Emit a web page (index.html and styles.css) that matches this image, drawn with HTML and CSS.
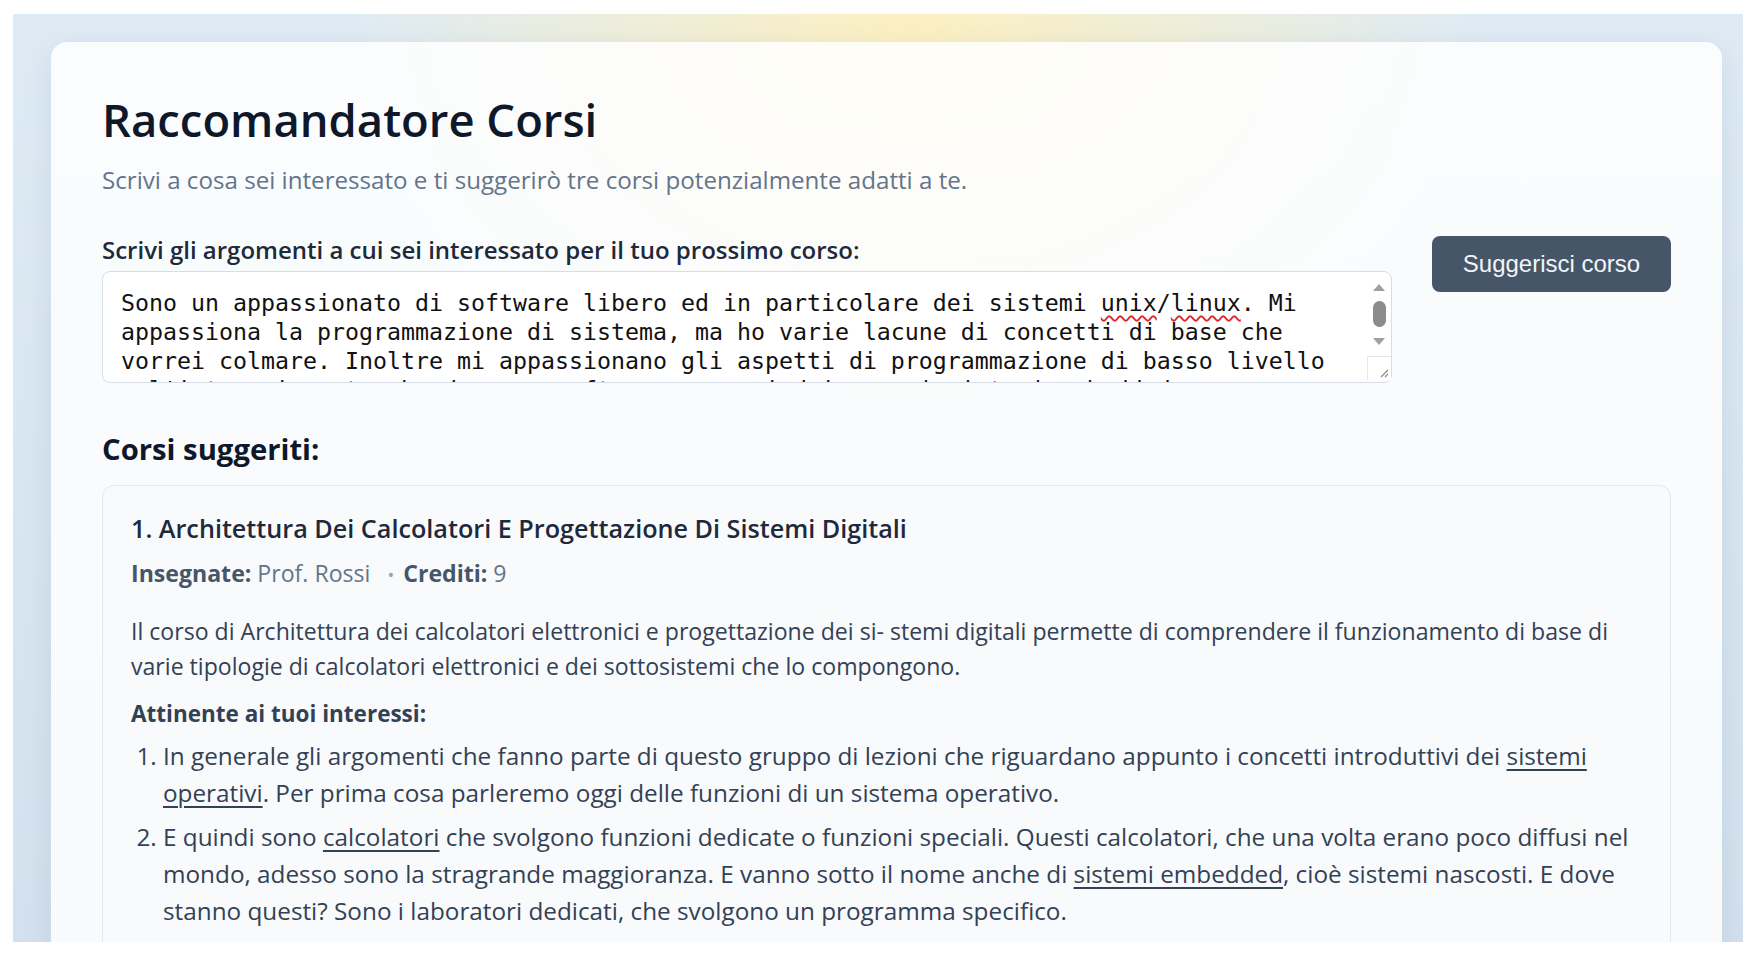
FILE: index.html
```html
<!DOCTYPE html>
<html lang="it">
<head>
    <meta charset="UTF-8">
    <title>Raccomandatore Corsi</title>
    <link rel="stylesheet" href="styles.css">
</head>
<body>

<div class="page">
    <main class="card">
        <h1>Raccomandatore Corsi</h1>
        <p class="intro">Scrivi a cosa sei interessato e ti suggerirò tre corsi potenzialmente adatti a te.</p>

        <div class="ask">
            <div class="ask-field">
                <label class="field-label" for="topics">Scrivi gli argomenti a cui sei interessato per il tuo prossimo corso:</label>
                <div class="input-wrap">
                    <div class="topics" id="topics" role="textbox" aria-multiline="true">Sono un appassionato di software libero ed in particolare dei sistemi <span class="typo">unix</span>/<span class="typo">linux</span>. Mi appassiona la programmazione di sistema, ma ho varie lacune di concetti di base che vorrei colmare. Inoltre mi appassionano gli aspetti di programmazione di basso livello e l'interazione tra hardware e software, come i driver e i sistemi embedded.</div>
                    <div class="fake-scroll" aria-hidden="true">
                        <span class="arrow up"></span>
                        <span class="thumb"></span>
                        <span class="arrow down"></span>
                        <span class="grip">
                            <svg width="10" height="10" viewBox="0 0 10 10"><path d="M9 2 L2 9 M9 6 L6 9" stroke="#8a8a8a" stroke-width="1.2" fill="none"/></svg>
                        </span>
                    </div>
                </div>
            </div>
            <button class="suggest">Suggerisci corso</button>
        </div>

        <h2>Corsi suggeriti:</h2>

        <section class="course">
            <h3>1. Architettura Dei Calcolatori E Progettazione Di Sistemi Digitali</h3>
            <div class="meta">
                <b>Insegnate:</b> Prof. Rossi<span class="dot">•</span><b>Crediti:</b> 9
            </div>
            <p class="desc">Il corso di Architettura dei calcolatori elettronici e progettazione dei si- stemi digitali permette di comprendere il funzionamento di base di varie tipologie di calcolatori elettronici e dei sottosistemi che lo compongono.</p>
            <h4>Attinente ai tuoi interessi:</h4>
            <ol class="matches">
                <li>In generale gli argomenti che fanno parte di questo gruppo di lezioni che riguardano appunto i concetti introduttivi dei <a href="#">sistemi operativi</a>. Per prima cosa parleremo oggi delle funzioni di un sistema operativo.</li>
                <li>E quindi sono <a href="#">calcolatori</a> che svolgono funzioni dedicate o funzioni speciali. Questi calcolatori, che una volta erano poco diffusi nel mondo, adesso sono la stragrande maggioranza. E vanno sotto il nome anche di <a href="#">sistemi embedded</a>, cioè sistemi nascosti. E dove stanno questi? Sono i laboratori dedicati, che svolgono un programma specifico.</li>
            </ol>
        </section>
    </main>
</div>

</body>
</html>
```

FILE: styles.css
```css
* {
    box-sizing: border-box;
}
body {
    margin: 0;
    background: #fff;
    font-family: "Open Sans", "Noto Sans", sans-serif;
    color: #1e293b;
}
.page {
    margin: 14px 12px 0 13px;
    height: 928px;
    overflow: hidden;
    padding: 28px 21px 0 38px;
    background:
        radial-gradient(ellipse 800px 580px at 52% 0%, rgba(254, 240, 190, 0.95), rgba(254, 240, 190, 0) 72%),
        linear-gradient(180deg, #deebf5, #d2e1ed);
}
.card {
    background: rgba(255, 255, 255, 0.84);
    border-radius: 16px;
    box-shadow: 0 8px 30px rgba(30, 41, 59, 0.08);
    padding: 46px 51px 40px;
}
h1 {
    margin: 0;
    font-size: 45.4px;
    line-height: 62px;
    font-weight: 600;
    color: #0f172a;
}
.intro {
    margin: 13px 0 0;
    font-size: 24.15px;
    line-height: 33px;
    color: #64748b;
}
.ask {
    display: flex;
    align-items: flex-start;
    gap: 40px;
    margin-top: 40px;
}
.ask-field {
    flex: 1;
}
.field-label {
    display: block;
    font-size: 24px;
    line-height: 28px;
    font-weight: 600;
    color: #1e293b;
    margin-bottom: 7px;
}
.input-wrap {
    position: relative;
}
.topics {
    height: 112px;
    overflow: hidden;
    padding: 16px 45px 0 18px;
    background: #fff;
    border: 1px solid #d6dee8;
    border-radius: 8px;
    font-family: "DejaVu Sans Mono", monospace;
    font-size: 23.25px;
    line-height: 29px;
    color: #111;
}
.typo {
    text-decoration: underline wavy #e0262b;
    text-decoration-thickness: 1.5px;
    text-underline-offset: 4px;
}
.fake-scroll {
    position: absolute;
    top: 1px;
    right: 1px;
    bottom: 1px;
    width: 24px;
    display: flex;
    flex-direction: column;
    align-items: center;
}
.arrow {
    width: 0;
    height: 0;
    border-left: 6px solid transparent;
    border-right: 6px solid transparent;
}
.arrow.up {
    margin-top: 12px;
    border-bottom: 7px solid #a0a0a0;
}
.arrow.down {
    margin-top: 11px;
    border-top: 7px solid #a0a0a0;
}
.thumb {
    margin-top: 10px;
    width: 13px;
    height: 26px;
    border-radius: 7px;
    background: #8c8c8c;
}
.grip {
    margin-top: 11px;
    align-self: flex-end;
    width: 24px;
    height: 24px;
    border-top: 1px solid #e6e6e6;
    border-left: 1px solid #e6e6e6;
    background: #fff;
    display: flex;
    align-items: flex-end;
    justify-content: flex-end;
    padding: 0 2px 2px 0;
}
.suggest {
    width: 239px;
    height: 56px;
    border: 0;
    border-radius: 8px;
    background: #475569;
    color: #f1f5f9;
    font-family: "Liberation Sans", Arial, sans-serif;
    font-size: 24px;
    cursor: pointer;
}
h2 {
    margin: 48px 0 18px;
    font-size: 29.25px;
    line-height: 36px;
    font-weight: 700;
    color: #0f172a;
}
.course {
    background: #f8fafc;
    border: 1px solid #e2e8f0;
    border-radius: 12px;
    padding: 25px 28px 30px;
}
h3 {
    margin: 0;
    font-size: 25.2px;
    line-height: 34px;
    font-weight: 600;
    color: #1e293b;
}
.meta {
    margin-top: 13px;
    font-size: 23.1px;
    line-height: 30px;
    color: #64748b;
}
.meta b {
    color: #475569;
}
.dot {
    color: #94a3b8;
    font-size: 18px;
    margin: 0 9px 0 17px;
}
.desc {
    margin: 24px 0 0;
    font-size: 23.1px;
    line-height: 35px;
    color: #334155;
}
h4 {
    margin: 15px 0 0;
    font-size: 22.5px;
    line-height: 30px;
    font-weight: 700;
    color: #334155;
}
.matches {
    margin: 8px 0 0;
    padding-left: 32px;
    font-size: 24.3px;
    line-height: 37px;
    color: #334155;
}
.matches li + li {
    margin-top: 7px;
}
.matches a {
    color: #334155;
    text-decoration: underline;
    text-decoration-thickness: 1.5px;
    text-underline-offset: 4px;
}
```
